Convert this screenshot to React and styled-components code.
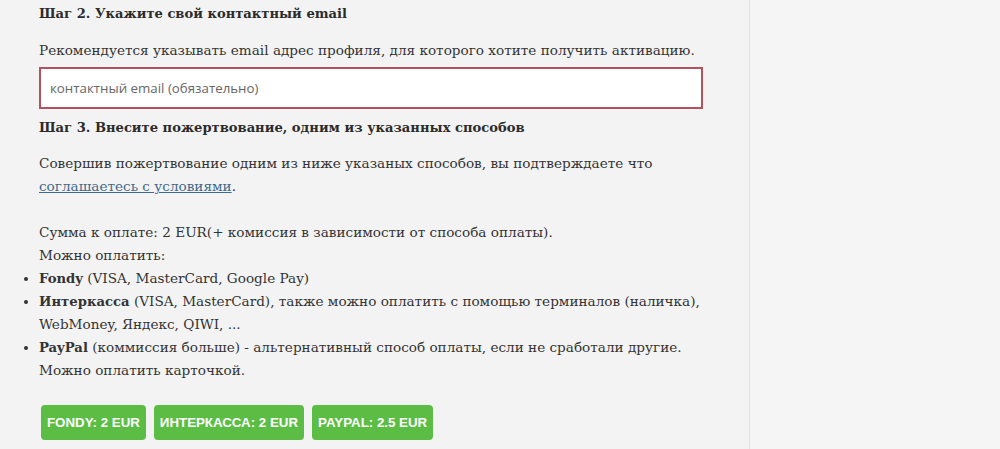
import React from "react";
import styled, { createGlobalStyle } from "styled-components";

const GlobalStyle = createGlobalStyle`
  html, body {
    margin: 0;
    padding: 0;
    background: #f5f5f5;
  }
`;

const Page = styled.div`
  display: flex;
  width: 1000px;
  height: 449px;
  overflow: hidden;
`;

const Main = styled.div`
  width: 750px;
  box-sizing: border-box;
  padding: 2px 0 0 39px;
  background: #f3f3f3;
  border-right: 1px solid #e2e2e2;
  font-family: "DejaVu Serif", "Liberation Serif", serif;
  font-size: 13.6px;
  line-height: 23px;
  color: #333;
`;

const Aside = styled.div`
  flex: 1;
  background: #f5f5f5;
`;

const StepTitle = styled.h3`
  margin: ${(p) => p.$top || 0}px 0 0;
  font-size: 13.1px;
  font-weight: bold;
  line-height: 23px;
  color: #2b2b2b;
`;

const Text = styled.p`
  margin: ${(p) => p.$top || 0}px 0 0;
`;

const Link = styled.a`
  color: #3f6a8c;
  text-decoration: underline;
`;

const EmailInput = styled.input`
  display: block;
  box-sizing: border-box;
  width: 664px;
  height: 42px;
  margin-top: 5px;
  padding: 0 9px;
  border: 2px solid #b5505f;
  background: #fff;
  font-family: "Open Sans", "Liberation Sans", sans-serif;
  font-size: 13.3px;
  color: #555;
  outline: none;
  &::placeholder {
    color: #666;
  }
`;

const List = styled.ul`
  margin: 0;
  padding: 0;
  list-style: disc outside;
`;

const Item = styled.li`
  margin: 0;
  & b {
    font-size: 13.2px;
  }
`;

const Buttons = styled.div`
  display: flex;
  gap: 8px;
  margin: 23px 0 0 2px;
`;

const PayButton = styled.button`
  height: 35px;
  padding: 0 6px;
  border: none;
  border-radius: 4px;
  background: #5bbd44;
  color: #fff;
  font-family: "Liberation Sans", Arial, sans-serif;
  font-weight: bold;
  font-size: 13.3px;
  text-transform: uppercase;
  cursor: pointer;
`;

export default function App() {
  return (
    <>
      <GlobalStyle />
      <Page>
        <Main>
          <StepTitle>Шаг 2. Укажите свой контактный email</StepTitle>
          <Text $top={14}>
            Рекомендуется указывать email адрес профиля, для которого хотите получить активацию.
          </Text>
          <EmailInput placeholder="контактный email (обязательно)" />
          <StepTitle $top={7}>Шаг 3. Внесите пожертвование, одним из указанных способов</StepTitle>
          <Text $top={13}>
            Совершив пожертвование одним из ниже указаных способов, вы подтверждаете что
            <br />
            <Link href="#">соглашаетесь с условиями</Link>.
          </Text>
          <Text $top={23}>
            Сумма к оплате: 2 EUR(+ комиссия в зависимости от способа оплаты).
            <br />
            Можно оплатить:
          </Text>
          <List>
            <Item>
              <b>Fondy</b> (VISA, MasterCard, Google Pay)
            </Item>
            <Item>
              <b>Интеркасса</b> (VISA, MasterCard), также можно оплатить с помощью терминалов (наличка),
              <br />
              WebMoney, Яндекс, QIWI, ...
            </Item>
            <Item>
              <b>PayPal</b> (коммиссия больше) - альтернативный способ оплаты, если не сработали другие.
              <br />
              Можно оплатить карточкой.
            </Item>
          </List>
          <Buttons>
            <PayButton>Fondy: 2 EUR</PayButton>
            <PayButton>Интеркасса: 2 EUR</PayButton>
            <PayButton>PayPal: 2.5 EUR</PayButton>
          </Buttons>
        </Main>
        <Aside />
      </Page>
    </>
  );
}
